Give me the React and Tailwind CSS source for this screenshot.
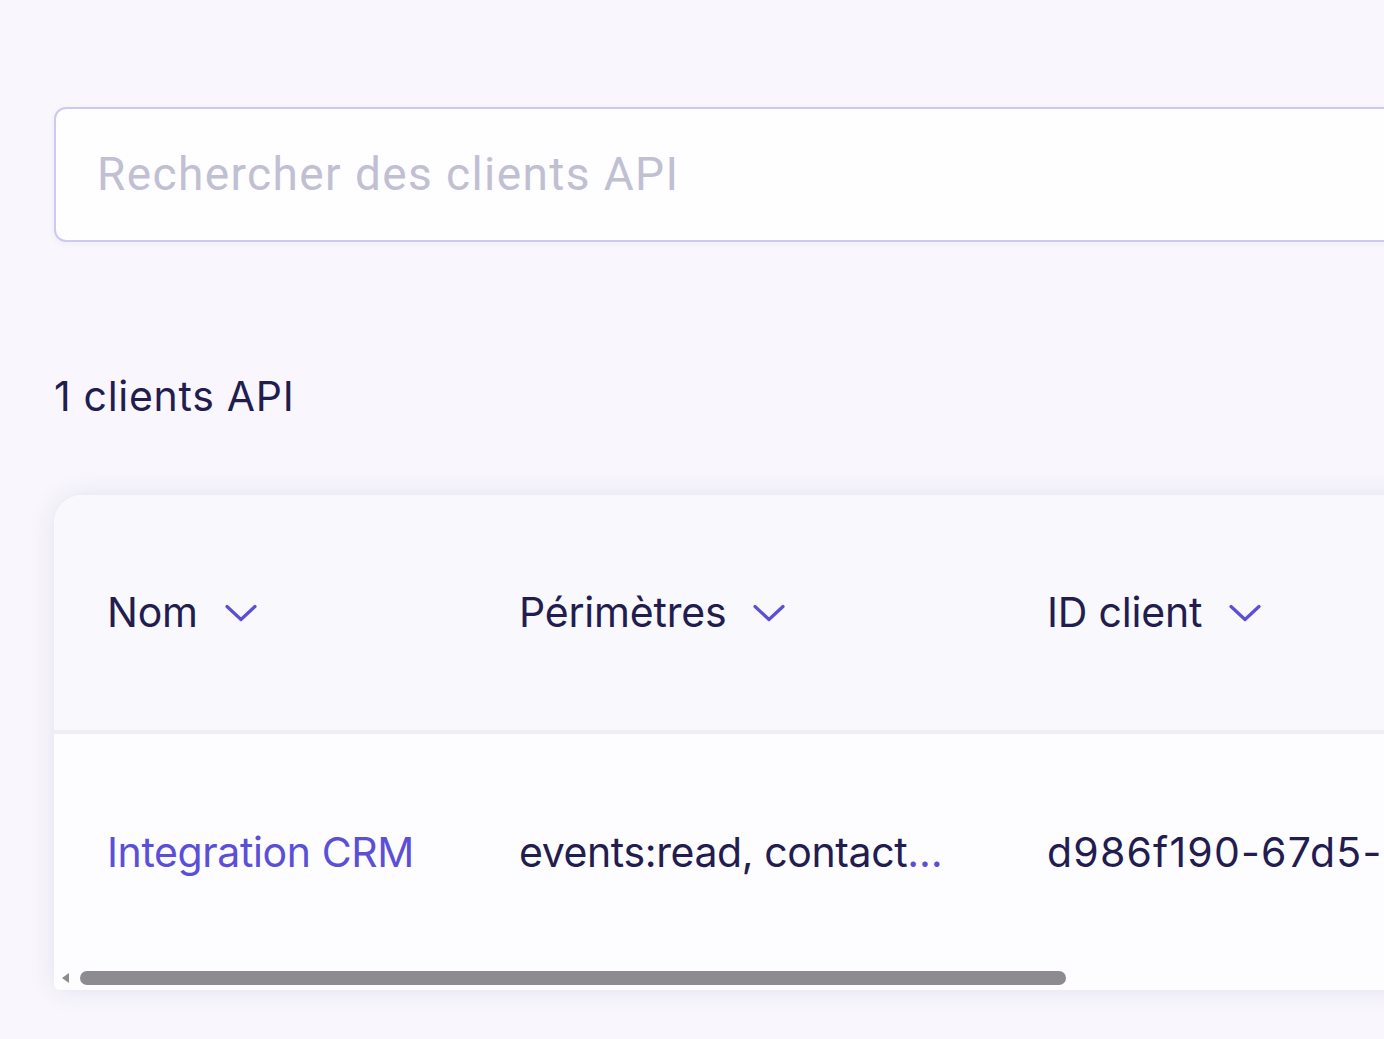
const COLUMNS = [
  { key: 'name', label: 'Nom', width: 'w-[412px]' },
  { key: 'scopes', label: 'Périmètres', width: 'w-[528px]' },
  { key: 'id', label: 'ID client', width: 'w-[600px]' },
];

function Chevron() {
  return (
    <svg width="32" height="18" viewBox="0 0 32 18" fill="none" className="shrink-0">
      <path d="M2 2.5 L16 15.5 L30 2.5" stroke="#5b4fd8" strokeWidth="3.2" strokeLinecap="round" strokeLinejoin="round" />
    </svg>
  );
}

export default function App() {
  return (
    <div className="w-screen h-screen overflow-hidden bg-[#f9f7fd] text-[#231d4f] font-['Inter',sans-serif]">
      <div className="pl-[54px] pt-[107px] w-[1500px]">

        {/* Search */}
        <div className="h-[135px] rounded-[12px] border-2 border-[#cdc9f1] bg-[#fefdff] flex items-center pl-[41px] shadow-[0_2px_6px_rgba(60,50,120,0.05)]">
          <span className="font-['Roboto',sans-serif] text-[46px] text-[#c1bfd2] tracking-[1.4px]">Rechercher des clients API</span>
        </div>

        {/* Count */}
        <p className="mt-[134px] text-[41px] leading-none tracking-[0.7px]">1 clients API</p>

        {/* Table card */}
        <div className="mt-[78px] rounded-tl-[28px] rounded-bl-[6px] overflow-hidden bg-[#fdfcff] shadow-[0_0_26px_rgba(50,40,110,0.11)]">
          <div className="h-[235px] bg-[#f9f8fd] flex items-center">
            {COLUMNS.map(c => (
              <div key={c.key} className={`${c.width} shrink-0 pl-[53px] flex items-center gap-[27px]`}>
                <span className="text-[41px] leading-none tracking-[-0.2px]">{c.label}</span>
                <Chevron />
              </div>
            ))}
          </div>
          <div className="h-[4px] bg-[#efedf5]" />
          <div className="h-[236px] flex items-center">
            <div className="w-[412px] shrink-0 pl-[53px]">
              <span className="text-[41px] leading-none text-[#5b4fd8] tracking-[-0.4px]">Integration CRM</span>
            </div>
            <div className="w-[528px] shrink-0 pl-[53px] whitespace-nowrap">
              <span className="text-[41px] leading-none tracking-[-0.4px]">events:read, contact</span>
              <span className="text-[41px] leading-none text-[#5b4fd8]">…</span>
            </div>
            <div className="w-[600px] shrink-0 pl-[53px] whitespace-nowrap">
              <span className="text-[41px] leading-none tracking-[1.2px]">d986f190-67d5-</span>
            </div>
          </div>

          {/* Horizontal scrollbar */}
          <div className="h-[20px] flex items-center gap-[10px] pl-[6px] pb-[4px]">
            <svg width="10" height="12" viewBox="0 0 10 12">
              <path d="M9 1 L2 6 L9 11 Z" fill="#8d8b90" />
            </svg>
            <div className="w-[986px] h-[14px] rounded-full bg-[#8d8b90]" />
          </div>
        </div>

      </div>
    </div>
  );
}
